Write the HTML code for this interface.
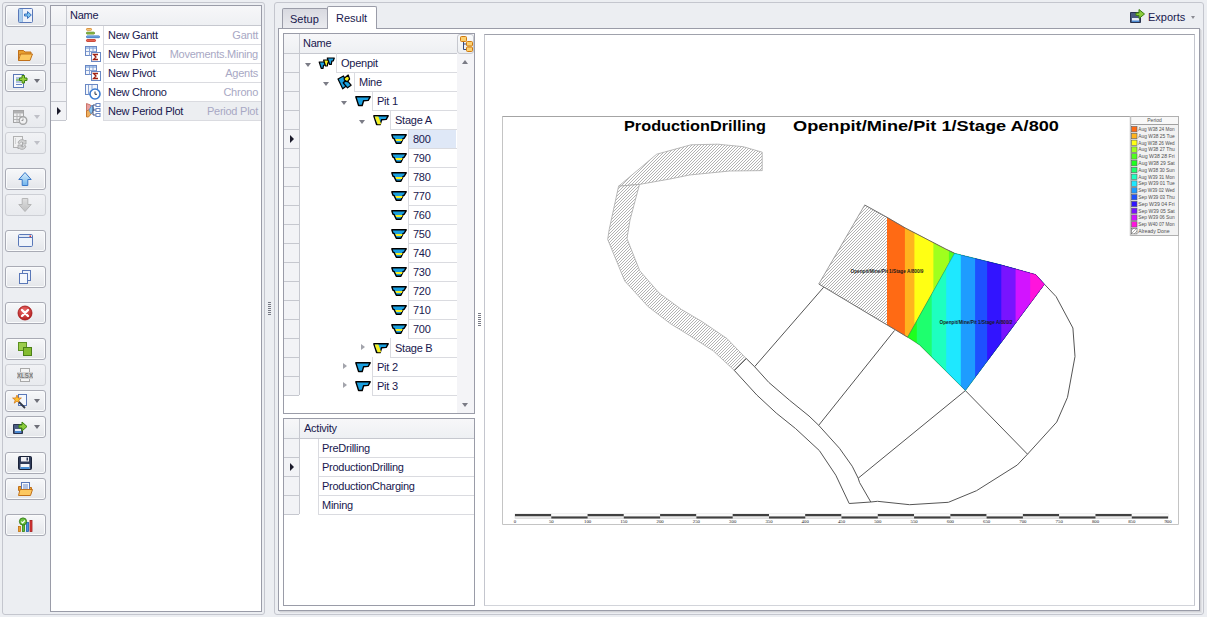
<!DOCTYPE html><html><head><meta charset="utf-8"><style>
*{box-sizing:border-box;margin:0;padding:0}
html,body{width:1207px;height:617px;overflow:hidden;background:#eceef2;font-family:"Liberation Sans",sans-serif;font-size:11px;color:#18184e}
.a{position:absolute}
.panel{position:absolute;border:1px solid #c4c6ce;border-radius:3px;background:#eceef2}
.btn{position:absolute;left:5px;width:41px;height:22px;border:1px solid #a9abb5;border-radius:3px;background:linear-gradient(#f7f8fa,#e4e6ea);box-shadow:inset 0 0 0 1px #fafbfc}
.btn.dis{border-color:#cdcfd5;background:linear-gradient(#f1f2f5,#e8eaee);box-shadow:none}
.btn .dd{position:absolute;left:28px;top:8px;width:0;height:0;border-left:3.5px solid transparent;border-right:3.5px solid transparent;border-top:4px solid #6e6f78}
.btn.dis .dd{border-top-color:#bfc0c7}
.grid{position:absolute;background:#fff;border:1px solid #9a9ca8}
.hdr{position:absolute;background:linear-gradient(#f7f7f9,#eef0f3);border-bottom:1px solid #c6c8cf}
.ind{position:absolute;background:#f2f3f6}
.hl{position:absolute;height:1px;background:#dadbe0}
.vl{position:absolute;width:1px;background:#dadbe0}
.t{position:absolute;white-space:nowrap;line-height:13px;letter-spacing:-0.25px}
.g{color:#a8a8c4}
.arr{position:absolute;width:0;height:0;border-top:4px solid transparent;border-bottom:4px solid transparent;border-left:4px solid #1a1a2a}
.exp{position:absolute;width:0;height:0;border-left:3.5px solid transparent;border-right:3.5px solid transparent;border-top:4px solid #7b7c86}
.col{position:absolute;width:0;height:0;border-top:3.5px solid transparent;border-bottom:3.5px solid transparent;border-left:4px solid #a3a4ac}
.grip{position:absolute;width:3px;height:13px;background:repeating-linear-gradient(#777984 0 1px,transparent 1px 2px)}
</style></head><body>
<div class="panel" style="left:2px;top:2px;width:263px;height:613px"></div>
<div class="btn" style="top:5px"><svg class="a" style="left:11px;top:1px" width="16" height="16" viewBox="0 0 16 16"><rect x="1.5" y="1.5" width="14" height="14" rx="1" fill="#eef2fa" stroke="#5a78b8"/>
<rect x="2" y="2" width="3" height="13" fill="#a9cdee"/><line x1="5.5" y1="2" x2="5.5" y2="15" stroke="#9ab8e0"/>
<path d="M7.5 7h3v-2.5l3.8 3.5-3.8 3.5v-2.5h-3z" fill="#7cc4f0" stroke="#2c68b8" stroke-width="0.9" stroke-linejoin="round"/></svg></div>
<div class="btn" style="top:44px"><svg class="a" style="left:11px;top:2px" width="16" height="16" viewBox="0 0 16 16"><path d="M1.5 3.5h5l1.5 1.5h6v3h-12.5z" fill="#e8a030" stroke="#c0701a"/>
<path d="M1.5 13.5l2-6.5h12l-2.5 6.5z" fill="#fcc860" stroke="#c0701a" stroke-linejoin="round"/>
<path d="M1.5 3.5v10" stroke="#c0701a"/></svg></div>
<div class="btn" style="top:70px"><svg class="a" style="left:6px;top:2px" width="16" height="16" viewBox="0 0 16 16"><rect x="1.5" y="1.5" width="10" height="13" fill="#f6f8fc" stroke="#5a78b8"/>
<path d="M4 5h5M4 9h5M4 11.5h6" stroke="#6a88c4" stroke-width="1"/><path d="M4 7h5" stroke="#4aa020" stroke-width="1.2"/>
<path d="M10 2.5h2.5v2.5h2.5v2.5h-2.5v2.5h-2.5v-2.5h-2.5v-2.5h2.5z" fill="#9ad040" stroke="#3c8010" stroke-width="1"/></svg><div class="dd"></div></div>
<div class="btn dis" style="top:106px"><svg class="a" style="left:6px;top:2px;opacity:0.72" width="16" height="16" viewBox="0 0 16 16"><rect x="1.5" y="1.5" width="10" height="12" fill="#f0f0f0" stroke="#8a8a8a"/>
<rect x="2" y="2" width="9" height="2.5" fill="#9a9a9a"/><path d="M2 7.5h9M2 10.5h5M5 4.5v9M8 4.5v4" stroke="#a0a0a0"/>
<circle cx="11" cy="11.5" r="3.8" fill="#f4f4f4" stroke="#8a8a8a" stroke-width="1.4"/><path d="M11 9.5v2h-1.5" stroke="#7a7a7a" fill="none"/></svg><div class="dd"></div></div>
<div class="btn dis" style="top:132px"><svg class="a" style="left:6px;top:2px;opacity:0.72" width="16" height="16" viewBox="0 0 16 16"><rect x="1.5" y="1.5" width="9" height="11" fill="#f2f2f2" stroke="#9a9a9a"/>
<path d="M3 4h1M3 6h1M3 8h1" stroke="#a0a0a0"/>
<path d="M6 8a4 4 0 0 1 7-2l1-1v4h-4l1.2-1.2a2.3 2.3 0 0 0-3.5 0.7z" fill="#c8c8c8" stroke="#8a8a8a" stroke-width="0.8"/>
<path d="M14 11a4 4 0 0 1-7 2l-1 1v-4h4l-1.2 1.2a2.3 2.3 0 0 0 3.5-0.7z" fill="#c8c8c8" stroke="#8a8a8a" stroke-width="0.8"/></svg><div class="dd"></div></div>
<div class="btn" style="top:168px"><svg class="a" style="left:11px;top:2px" width="16" height="16" viewBox="0 0 16 16"><defs><linearGradient id="gu" x1="0" y1="0" x2="0" y2="1"><stop offset="0" stop-color="#d8eefc"/><stop offset="1" stop-color="#70b4ec"/></linearGradient></defs>
<path d="M8 1.5l6.2 7h-3.4v6h-5.6v-6h-3.4z" fill="url(#gu)" stroke="#3a78c8" stroke-linejoin="round"/></svg></div>
<div class="btn dis" style="top:194px"><svg class="a" style="left:11px;top:2px;opacity:0.72" width="16" height="16" viewBox="0 0 16 16"><defs><linearGradient id="gd" x1="0" y1="0" x2="0" y2="1"><stop offset="0" stop-color="#d8d8d8"/><stop offset="1" stop-color="#b0b0b0"/></linearGradient></defs>
<path d="M8 14.5l6.2-7h-3.4v-6h-5.6v6h-3.4z" fill="url(#gd)" stroke="#a0a0a0" stroke-linejoin="round"/></svg></div>
<div class="btn" style="top:230px"><svg class="a" style="left:11px;top:2px" width="16" height="16" viewBox="0 0 16 16"><rect x="1.5" y="1.5" width="14" height="12" rx="1.2" fill="#eef3fb" stroke="#5a78b8"/>
<rect x="2" y="2" width="13" height="2.5" fill="#dfe8f6"/><path d="M2 4.5h13" stroke="#5a78b8"/><rect x="12.5" y="2.5" width="1.5" height="1.5" fill="#e03030"/></svg></div>
<div class="btn" style="top:266px"><svg class="a" style="left:11px;top:2px" width="16" height="16" viewBox="0 0 16 16"><rect x="5.5" y="1.5" width="8" height="10" fill="#eef3fb" stroke="#5a78b8"/>
<rect x="2.5" y="4.5" width="8" height="10" fill="#f4f7fc" stroke="#5a78b8"/></svg></div>
<div class="btn" style="top:302px"><svg class="a" style="left:11px;top:2px" width="16" height="16" viewBox="0 0 16 16"><defs><radialGradient id="gr" cx="0.45" cy="0.35" r="0.7"><stop offset="0" stop-color="#f07070"/><stop offset="1" stop-color="#b01818"/></radialGradient></defs>
<circle cx="8" cy="8" r="7" fill="url(#gr)" stroke="#a01010" stroke-width="0.8"/>
<path d="M5 5l6 6M11 5l-6 6" stroke="#fff" stroke-width="2.4" stroke-linecap="round"/></svg></div>
<div class="btn" style="top:338px"><svg class="a" style="left:11px;top:2px" width="16" height="16" viewBox="0 0 16 16"><rect x="1.5" y="1.5" width="8" height="8" fill="#9ccc4c" stroke="#5c9020"/>
<rect x="6.5" y="6.5" width="8" height="8" fill="#84bc30" stroke="#4c8018"/></svg></div>
<div class="btn dis" style="top:364px"><svg class="a" style="left:11px;top:2px" width="16" height="16" viewBox="0 0 16 16"><rect x="3.5" y="1.5" width="9" height="13" fill="#f4f4f4" stroke="#a8a8a8"/>
<rect x="0" y="5" width="16" height="7" fill="#d4d4d4"/>
<text x="8" y="11" font-family="Liberation Sans" font-size="7" font-weight="bold" fill="#7a7a7a" text-anchor="middle" textLength="16" lengthAdjust="spacingAndGlyphs">XLSX</text></svg></div>
<div class="btn" style="top:390px"><svg class="a" style="left:6px;top:2px" width="16" height="16" viewBox="0 0 16 16"><rect x="6.5" y="1.5" width="8" height="11" fill="#f4f7fc" stroke="#5a78b8"/>
<path d="M5 2l1.2 3h3.2l-2.6 2 1 3.2-2.8-2-2.8 2 1-3.2-2.6-2h3.2z" fill="#ffc030" stroke="#d07010" stroke-width="0.7"/>
<path d="M7 9l6 6" stroke="#303848" stroke-width="1.8"/></svg><div class="dd"></div></div>
<div class="btn" style="top:416px"><svg class="a" style="left:6px;top:2px" width="16" height="16" viewBox="0 0 16 16"><path d="M1.5 5.5h9v9h-9z" fill="#4a5a80" stroke="#2a3450"/><rect x="3" y="10" width="6" height="4" fill="#e8eef8"/><rect x="3" y="12" width="6" height="2" fill="#4a88d0"/>
<path d="M7 6h3v-3l5 4.5l-5 4.5v-3h-3z" fill="#8ccc3c" stroke="#3c8010" stroke-linejoin="round"/></svg><div class="dd"></div></div>
<div class="btn" style="top:452px"><svg class="a" style="left:11px;top:2px" width="16" height="16" viewBox="0 0 16 16"><rect x="1.5" y="1.5" width="13" height="13" rx="1" fill="#2e3a58" stroke="#1a2238"/>
<rect x="4" y="2" width="8" height="4.5" fill="#f0f0f4"/><rect x="9.5" y="2.5" width="1.5" height="3" fill="#2e3a58"/>
<rect x="3.5" y="9" width="9" height="5" fill="#f4f6fa"/><rect x="3.5" y="12" width="9" height="2" fill="#4a90d8"/></svg></div>
<div class="btn" style="top:478px"><svg class="a" style="left:11px;top:2px" width="16" height="16" viewBox="0 0 16 16"><path d="M1.5 5.5h3l1 1h9v3h-13z" fill="#e8a030" stroke="#c0701a"/>
<rect x="4.5" y="1.5" width="8" height="9" fill="#f6f8fc" stroke="#5a78b8"/><path d="M6 4h5M6 6h5M6 8h5" stroke="#6a88c4"/>
<path d="M1.5 14.5l1.5-6h12.5l-2 6z" fill="#fcc860" stroke="#c0701a" stroke-linejoin="round"/></svg></div>
<div class="btn" style="top:514px"><svg class="a" style="left:11px;top:2px" width="16" height="16" viewBox="0 0 16 16"><rect x="1.5" y="9.5" width="2" height="5" fill="#f0a030" stroke="#c07010" stroke-width="0.8"/>
<rect x="5.5" y="7.5" width="2" height="7" fill="#60c040" stroke="#308010" stroke-width="0.8"/>
<rect x="9.5" y="5.5" width="2" height="9" fill="#4a90e0" stroke="#2060b0" stroke-width="0.8"/>
<rect x="13" y="3.5" width="2" height="11" fill="#e04040" stroke="#a01818" stroke-width="0.8"/>
<circle cx="6" cy="4.5" r="3.6" fill="#6cc040" stroke="#2c7810" stroke-width="0.9"/><path d="M4.3 4.6l1.3 1.3 2.3-2.4" stroke="#fff" stroke-width="1.1" fill="none"/></svg></div>
<div class="grid" style="left:50px;top:5px;width:212px;height:607px"></div>
<div class="hdr" style="left:51px;top:6px;width:210px;height:20px"></div>
<div class="a" style="left:66px;top:6px;width:1px;height:19px;background:#c6c8cf"></div>
<div class="t" style="left:70px;top:9px">Name</div>
<div class="ind" style="left:51px;top:26px;width:15px;height:94px"></div>
<div class="a" style="left:66px;top:26px;width:1px;height:94px;background:#c6c8cf"></div>
<svg class="a" style="left:85px;top:27px" width="16" height="16" viewBox="0 0 16 16"><rect x="1.5" y="1.5" width="5" height="1.8" rx="0.6" fill="#fad08a" stroke="#d88a30" stroke-width="0.9"/>
<rect x="1.5" y="5.2" width="8" height="1.8" rx="0.6" fill="#9ccc50" stroke="#5a8a20" stroke-width="0.9"/>
<rect x="1.5" y="8.9" width="13" height="1.8" rx="0.6" fill="#7ab4ec" stroke="#3a74c0" stroke-width="0.9"/>
<rect x="1.5" y="12.6" width="9" height="1.8" rx="0.6" fill="#f07060" stroke="#c03020" stroke-width="0.9"/></svg>
<div class="t" style="left:108px;top:29px">New Gantt</div>
<div class="t g" style="right:949px;top:29px">Gantt</div>
<div class="hl" style="left:51px;top:44px;width:15px;background:#c6c8cf"></div>
<div class="hl" style="left:103px;top:44px;width:158px"></div>
<svg class="a" style="left:85px;top:46px" width="16" height="16" viewBox="0 0 16 16"><rect x="0.5" y="0.5" width="11" height="9" fill="#f4f7fc" stroke="#6a88c4"/><rect x="1" y="1" width="10" height="2" fill="#a8c4ea"/>
<path d="M1 5.5h10M4.5 1v8.5M8 1v4" stroke="#8aa4d4"/>
<rect x="6.5" y="6.5" width="9" height="9" fill="#fff" stroke="#6a88c4"/>
<path d="M13 8.5h-4.5l2.5 2.5-2.5 2.5h4.5" fill="none" stroke="#a02010" stroke-width="1.3"/></svg>
<div class="t" style="left:108px;top:48px">New Pivot</div>
<div class="t g" style="right:949px;top:48px">Movements.Mining</div>
<div class="hl" style="left:51px;top:63px;width:15px;background:#c6c8cf"></div>
<div class="hl" style="left:103px;top:63px;width:158px"></div>
<svg class="a" style="left:85px;top:65px" width="16" height="16" viewBox="0 0 16 16"><rect x="0.5" y="0.5" width="11" height="9" fill="#f4f7fc" stroke="#6a88c4"/><rect x="1" y="1" width="10" height="2" fill="#a8c4ea"/>
<path d="M1 5.5h10M4.5 1v8.5M8 1v4" stroke="#8aa4d4"/>
<rect x="6.5" y="6.5" width="9" height="9" fill="#fff" stroke="#6a88c4"/>
<path d="M13 8.5h-4.5l2.5 2.5-2.5 2.5h4.5" fill="none" stroke="#a02010" stroke-width="1.3"/></svg>
<div class="t" style="left:108px;top:67px">New Pivot</div>
<div class="t g" style="right:949px;top:67px">Agents</div>
<div class="hl" style="left:51px;top:82px;width:15px;background:#c6c8cf"></div>
<div class="hl" style="left:103px;top:82px;width:158px"></div>
<svg class="a" style="left:85px;top:84px" width="16" height="16" viewBox="0 0 16 16"><rect x="0.5" y="0.5" width="12" height="10" fill="#f4f7fc" stroke="#6a88c4"/><path d="M3.5 1v9.5M7 1v4" stroke="#8aa4d4"/>
<circle cx="10" cy="10" r="5" fill="#fff" stroke="#3a7ad0" stroke-width="1.6"/><path d="M10 7.5v2.8h2" stroke="#303848" stroke-width="1" fill="none"/></svg>
<div class="t" style="left:108px;top:86px">New Chrono</div>
<div class="t g" style="right:949px;top:86px">Chrono</div>
<div class="hl" style="left:51px;top:101px;width:15px;background:#c6c8cf"></div>
<div class="hl" style="left:103px;top:101px;width:158px"></div>
<div class="a" style="left:104px;top:102px;width:157px;height:18px;background:#eceef1"></div>
<svg class="a" style="left:85px;top:102px" width="16" height="16" viewBox="0 0 16 16"><path d="M1.5 1.5l4 1.5 2 4-2 3.5-4 4z" fill="#e8a0a0" stroke="#c06050" stroke-width="0.8"/>
<path d="M1.5 9l4-2 2 3.5-4 4.5h-2z" fill="#f0b060" stroke="#c07020" stroke-width="0.8"/>
<path d="M4 8l3-5 2 4-3 5z" fill="#8ac4ee" stroke="#4a88c8" stroke-width="0.7"/>
<path d="M8 3h3M8 8h3M8 13h3M8 3v10" stroke="#3a4a78" stroke-width="1"/>
<rect x="11" y="1.5" width="4" height="3" fill="#fff" stroke="#6a88c4"/><rect x="11" y="6.5" width="4" height="3" fill="#fff" stroke="#6a88c4"/><rect x="11" y="11.5" width="4" height="3" fill="#fff" stroke="#6a88c4"/></svg>
<div class="t" style="left:108px;top:105px">New Period Plot</div>
<div class="t g" style="right:949px;top:105px">Period Plot</div>
<div class="hl" style="left:51px;top:120px;width:15px;background:#c6c8cf"></div>
<div class="hl" style="left:103px;top:120px;width:158px"></div>
<div class="vl" style="left:103px;top:26px;height:94px"></div>
<div class="arr" style="left:57px;top:107px"></div>
<div class="grip" style="left:268px;top:302px"></div>
<div class="panel" style="left:274px;top:2px;width:930px;height:613px"></div>
<div class="a" style="left:282px;top:8px;width:46px;height:21px;border:1px solid #9a9ca8;border-bottom:none;border-radius:2px 2px 0 0;background:linear-gradient(#d8d9e0,#ebecf0)"></div>
<div class="t" style="left:290px;top:13px;letter-spacing:0">Setup</div>
<div class="a" style="left:327px;top:6px;width:50px;height:23px;border:1px solid #9a9ca8;border-bottom:none;border-radius:2px 2px 0 0;background:#fff;z-index:2"></div>
<div class="t" style="left:336px;top:12px;z-index:3;letter-spacing:0">Result</div>
<svg class="a" style="left:1130px;top:8px" width="16" height="16" viewBox="0 0 16 16"><path d="M0.5 4.5h10v10h-10z" fill="#4a5a80" stroke="#2a3450"/><rect x="2" y="10" width="7" height="4" fill="#e8eef8"/><rect x="2" y="12.5" width="7" height="1.5" fill="#4a88d0"/>
<path d="M6 5h3v-3.5l5.5 4.5-5.5 4.5v-3h-3z" fill="#8ccc3c" stroke="#3c8010" stroke-linejoin="round"/></svg>
<div class="t" style="left:1148px;top:11px;letter-spacing:0">Exports</div>
<div class="a" style="left:1191px;top:16px;width:0;height:0;border-left:2.5px solid transparent;border-right:2.5px solid transparent;border-top:3px solid #8a8b93"></div>
<div class="a" style="left:278px;top:28px;width:922px;height:583px;border:1px solid #9a9ca8;background:#fff;box-shadow:1px 1px 0 #d2d3d8,2px 2px 0 #e0e1e5"></div>
<div class="a" style="left:328px;top:28px;width:48px;height:1px;background:#fff;z-index:2"></div>
<div class="grid" style="left:283px;top:33px;width:192px;height:381px"></div>
<div class="hdr" style="left:284px;top:34px;width:173px;height:20px"></div>
<div class="a" style="left:299px;top:34px;width:1px;height:19px;background:#c6c8cf"></div>
<div class="t" style="left:303px;top:37px">Name</div>
<div class="a" style="left:457px;top:34px;width:17px;height:379px;background:#f4f4f7"></div>
<div class="a" style="left:457px;top:34px;width:17px;height:20px;border:1px solid #c6c8cf;border-radius:3px;background:linear-gradient(#fafbfc,#eceef1)"></div>
<svg class="a" style="left:458px;top:35px" width="16" height="18" viewBox="0 0 16 18"><path d="M5.5 6.5V14.5H9M5.5 9H9" stroke="#3a4a78" fill="none"/>
<rect x="2.5" y="1.5" width="6" height="5" rx="1" fill="#fcd070" stroke="#d07a10"/>
<rect x="8.5" y="6.5" width="6" height="4.5" rx="1" fill="#fcd070" stroke="#d07a10"/>
<rect x="8.5" y="12" width="6" height="4.5" rx="1" fill="#fcd070" stroke="#d07a10"/></svg>
<div class="a" style="left:462px;top:60px;width:0;height:0;border-left:3.5px solid transparent;border-right:3.5px solid transparent;border-bottom:4px solid #7a7b85"></div>
<div class="exp" style="left:462px;top:403px;border-top-color:#7a7b85"></div>
<div class="ind" style="left:284px;top:54px;width:15px;height:341px"></div>
<div class="a" style="left:299px;top:54px;width:1px;height:341px;background:#c6c8cf"></div>
<div class="vl" style="left:336px;top:53px;height:20px"></div>
<div class="hl" style="left:336px;top:72px;width:121px"></div>
<div class="hl" style="left:284px;top:72px;width:15px;background:#c6c8cf"></div>
<svg class="a" style="left:318px;top:57px" width="17" height="12" viewBox="0 0 17 12"><path d="M1.2 5h7l-1.2 3-1.5 0.3-0.5 3h-1.8z" fill="#1aa0e0" stroke="#000" stroke-width="1.2" stroke-linejoin="round"/>
<path d="M5.6 3h6.4l-1 2.6-1.2 0.3-0.5 3.1h-1.8z" fill="#f8f020" stroke="#000" stroke-width="1.2" stroke-linejoin="round"/>
<path d="M9.3 1h7l-1 2.8-1.5 0.3-0.5 3.2h-1.8z" fill="#1aa0e0" stroke="#000" stroke-width="1.2" stroke-linejoin="round"/></svg>
<div class="t" style="left:341px;top:57px">Openpit</div>
<div class="exp" style="left:305px;top:63px"></div>
<div class="vl" style="left:354px;top:72px;height:20px"></div>
<div class="hl" style="left:354px;top:91px;width:103px"></div>
<div class="hl" style="left:284px;top:91px;width:15px;background:#c6c8cf"></div>
<svg class="a" style="left:337px;top:74px" width="16" height="16" viewBox="0 0 16 16"><path d="M1 5l5.5-3 2.2 4.2-2.4 2.6 3 3.2-3.6 2.8z" fill="#1aa0e0" stroke="#000" stroke-width="1.2" stroke-linejoin="round"/>
<path d="M6.3 8.8l3.6-2.6 4.2 5-3.6 2.6z" fill="#1aa0e0" stroke="#000" stroke-width="1.2" stroke-linejoin="round"/>
<path d="M7.2 4.2l4-3.2 1.4 4-2.4 2.8-2.8-1.8z" fill="#f8f020" stroke="#000" stroke-width="1.2" stroke-linejoin="round"/></svg>
<div class="t" style="left:359px;top:76px">Mine</div>
<div class="exp" style="left:323px;top:82px"></div>
<div class="vl" style="left:372px;top:91px;height:20px"></div>
<div class="hl" style="left:372px;top:110px;width:85px"></div>
<div class="hl" style="left:284px;top:110px;width:15px;background:#c6c8cf"></div>
<svg class="a" style="left:355px;top:96px" width="16" height="11" viewBox="0 0 16 11"><path d="M0.8 0.8h14.4l-2 3.6-4.6 0.4-1.4 4.7h-3.6z" fill="#1aa0e0" stroke="#000" stroke-width="1.4" stroke-linejoin="round"/></svg>
<div class="t" style="left:377px;top:95px">Pit 1</div>
<div class="exp" style="left:341px;top:101px"></div>
<div class="vl" style="left:390px;top:110px;height:20px"></div>
<div class="hl" style="left:390px;top:129px;width:67px"></div>
<div class="hl" style="left:284px;top:129px;width:15px;background:#c6c8cf"></div>
<svg class="a" style="left:373px;top:115px" width="16" height="11" viewBox="0 0 16 11"><path d="M0.8 0.8h14.4l-2 3.6-4.6 0.4-1.4 4.7h-3.6z" fill="#1aa0e0" stroke="#000" stroke-width="1.4" stroke-linejoin="round"/>
<path d="M1.6 1.5h3.8l2.8 7.8h-3.6z" fill="#f8f020"/></svg>
<div class="t" style="left:395px;top:114px">Stage A</div>
<div class="exp" style="left:359px;top:120px"></div>
<div class="a" style="left:409px;top:130px;width:47px;height:18px;background:#dfe8f7"></div>
<div class="vl" style="left:408px;top:129px;height:20px"></div>
<div class="hl" style="left:408px;top:148px;width:49px"></div>
<div class="hl" style="left:284px;top:148px;width:15px;background:#c6c8cf"></div>
<svg class="a" style="left:391px;top:134px" width="16" height="11" viewBox="0 0 16 11"><path d="M0.8 0.8h14.4l-2 3.4-1 0.2-2.3 4.9h-4.6l-2.3-4.9-1-0.2z" fill="#1aa0e0" stroke="#000" stroke-width="1.4" stroke-linejoin="round"/>
<path d="M4.3 5h7.4l-0.9 2h-5.6z" fill="#f8f020"/></svg>
<div class="t" style="left:413px;top:133px">800</div>
<div class="vl" style="left:408px;top:148px;height:20px"></div>
<div class="hl" style="left:408px;top:167px;width:49px"></div>
<div class="hl" style="left:284px;top:167px;width:15px;background:#c6c8cf"></div>
<svg class="a" style="left:391px;top:153px" width="16" height="11" viewBox="0 0 16 11"><path d="M0.8 0.8h14.4l-2 3.4-1 0.2-2.3 4.9h-4.6l-2.3-4.9-1-0.2z" fill="#1aa0e0" stroke="#000" stroke-width="1.4" stroke-linejoin="round"/>
<path d="M4.3 5h7.4l-0.9 2h-5.6z" fill="#f8f020"/></svg>
<div class="t" style="left:413px;top:152px">790</div>
<div class="vl" style="left:408px;top:167px;height:20px"></div>
<div class="hl" style="left:408px;top:186px;width:49px"></div>
<div class="hl" style="left:284px;top:186px;width:15px;background:#c6c8cf"></div>
<svg class="a" style="left:391px;top:172px" width="16" height="11" viewBox="0 0 16 11"><path d="M0.8 0.8h14.4l-2 3.4-1 0.2-2.3 4.9h-4.6l-2.3-4.9-1-0.2z" fill="#1aa0e0" stroke="#000" stroke-width="1.4" stroke-linejoin="round"/>
<path d="M4.3 5h7.4l-0.9 2h-5.6z" fill="#f8f020"/></svg>
<div class="t" style="left:413px;top:171px">780</div>
<div class="vl" style="left:408px;top:186px;height:20px"></div>
<div class="hl" style="left:408px;top:205px;width:49px"></div>
<div class="hl" style="left:284px;top:205px;width:15px;background:#c6c8cf"></div>
<svg class="a" style="left:391px;top:191px" width="16" height="11" viewBox="0 0 16 11"><path d="M0.8 0.8h14.4l-2 3.4-1 0.2-2.3 4.9h-4.6l-2.3-4.9-1-0.2z" fill="#1aa0e0" stroke="#000" stroke-width="1.4" stroke-linejoin="round"/>
<path d="M4.3 5h7.4l-0.9 2h-5.6z" fill="#f8f020"/></svg>
<div class="t" style="left:413px;top:190px">770</div>
<div class="vl" style="left:408px;top:205px;height:20px"></div>
<div class="hl" style="left:408px;top:224px;width:49px"></div>
<div class="hl" style="left:284px;top:224px;width:15px;background:#c6c8cf"></div>
<svg class="a" style="left:391px;top:210px" width="16" height="11" viewBox="0 0 16 11"><path d="M0.8 0.8h14.4l-2 3.4-1 0.2-2.3 4.9h-4.6l-2.3-4.9-1-0.2z" fill="#1aa0e0" stroke="#000" stroke-width="1.4" stroke-linejoin="round"/>
<path d="M4.3 5h7.4l-0.9 2h-5.6z" fill="#f8f020"/></svg>
<div class="t" style="left:413px;top:209px">760</div>
<div class="vl" style="left:408px;top:224px;height:20px"></div>
<div class="hl" style="left:408px;top:243px;width:49px"></div>
<div class="hl" style="left:284px;top:243px;width:15px;background:#c6c8cf"></div>
<svg class="a" style="left:391px;top:229px" width="16" height="11" viewBox="0 0 16 11"><path d="M0.8 0.8h14.4l-2 3.4-1 0.2-2.3 4.9h-4.6l-2.3-4.9-1-0.2z" fill="#1aa0e0" stroke="#000" stroke-width="1.4" stroke-linejoin="round"/>
<path d="M4.3 5h7.4l-0.9 2h-5.6z" fill="#f8f020"/></svg>
<div class="t" style="left:413px;top:228px">750</div>
<div class="vl" style="left:408px;top:243px;height:20px"></div>
<div class="hl" style="left:408px;top:262px;width:49px"></div>
<div class="hl" style="left:284px;top:262px;width:15px;background:#c6c8cf"></div>
<svg class="a" style="left:391px;top:248px" width="16" height="11" viewBox="0 0 16 11"><path d="M0.8 0.8h14.4l-2 3.4-1 0.2-2.3 4.9h-4.6l-2.3-4.9-1-0.2z" fill="#1aa0e0" stroke="#000" stroke-width="1.4" stroke-linejoin="round"/>
<path d="M4.3 5h7.4l-0.9 2h-5.6z" fill="#f8f020"/></svg>
<div class="t" style="left:413px;top:247px">740</div>
<div class="vl" style="left:408px;top:262px;height:20px"></div>
<div class="hl" style="left:408px;top:281px;width:49px"></div>
<div class="hl" style="left:284px;top:281px;width:15px;background:#c6c8cf"></div>
<svg class="a" style="left:391px;top:267px" width="16" height="11" viewBox="0 0 16 11"><path d="M0.8 0.8h14.4l-2 3.4-1 0.2-2.3 4.9h-4.6l-2.3-4.9-1-0.2z" fill="#1aa0e0" stroke="#000" stroke-width="1.4" stroke-linejoin="round"/>
<path d="M4.3 5h7.4l-0.9 2h-5.6z" fill="#f8f020"/></svg>
<div class="t" style="left:413px;top:266px">730</div>
<div class="vl" style="left:408px;top:281px;height:20px"></div>
<div class="hl" style="left:408px;top:300px;width:49px"></div>
<div class="hl" style="left:284px;top:300px;width:15px;background:#c6c8cf"></div>
<svg class="a" style="left:391px;top:286px" width="16" height="11" viewBox="0 0 16 11"><path d="M0.8 0.8h14.4l-2 3.4-1 0.2-2.3 4.9h-4.6l-2.3-4.9-1-0.2z" fill="#1aa0e0" stroke="#000" stroke-width="1.4" stroke-linejoin="round"/>
<path d="M4.3 5h7.4l-0.9 2h-5.6z" fill="#f8f020"/></svg>
<div class="t" style="left:413px;top:285px">720</div>
<div class="vl" style="left:408px;top:300px;height:20px"></div>
<div class="hl" style="left:408px;top:319px;width:49px"></div>
<div class="hl" style="left:284px;top:319px;width:15px;background:#c6c8cf"></div>
<svg class="a" style="left:391px;top:305px" width="16" height="11" viewBox="0 0 16 11"><path d="M0.8 0.8h14.4l-2 3.4-1 0.2-2.3 4.9h-4.6l-2.3-4.9-1-0.2z" fill="#1aa0e0" stroke="#000" stroke-width="1.4" stroke-linejoin="round"/>
<path d="M4.3 5h7.4l-0.9 2h-5.6z" fill="#f8f020"/></svg>
<div class="t" style="left:413px;top:304px">710</div>
<div class="vl" style="left:408px;top:319px;height:20px"></div>
<div class="hl" style="left:408px;top:338px;width:49px"></div>
<div class="hl" style="left:284px;top:338px;width:15px;background:#c6c8cf"></div>
<svg class="a" style="left:391px;top:324px" width="16" height="11" viewBox="0 0 16 11"><path d="M0.8 0.8h14.4l-2 3.4-1 0.2-2.3 4.9h-4.6l-2.3-4.9-1-0.2z" fill="#1aa0e0" stroke="#000" stroke-width="1.4" stroke-linejoin="round"/>
<path d="M4.3 5h7.4l-0.9 2h-5.6z" fill="#f8f020"/></svg>
<div class="t" style="left:413px;top:323px">700</div>
<div class="vl" style="left:390px;top:338px;height:20px"></div>
<div class="hl" style="left:390px;top:357px;width:67px"></div>
<div class="hl" style="left:284px;top:357px;width:15px;background:#c6c8cf"></div>
<svg class="a" style="left:373px;top:343px" width="16" height="11" viewBox="0 0 16 11"><path d="M0.8 0.8h14.4l-2 3.6-4.6 0.4-1.4 4.7h-3.6z" fill="#1aa0e0" stroke="#000" stroke-width="1.4" stroke-linejoin="round"/>
<path d="M1.6 1.5h3.8l2.8 7.8h-3.6z" fill="#f8f020"/></svg>
<div class="t" style="left:395px;top:342px">Stage B</div>
<div class="col" style="left:361px;top:344px"></div>
<div class="vl" style="left:372px;top:357px;height:20px"></div>
<div class="hl" style="left:372px;top:376px;width:85px"></div>
<div class="hl" style="left:284px;top:376px;width:15px;background:#c6c8cf"></div>
<svg class="a" style="left:355px;top:362px" width="16" height="11" viewBox="0 0 16 11"><path d="M0.8 0.8h14.4l-2 3.6-4.6 0.4-1.4 4.7h-3.6z" fill="#1aa0e0" stroke="#000" stroke-width="1.4" stroke-linejoin="round"/></svg>
<div class="t" style="left:377px;top:361px">Pit 2</div>
<div class="col" style="left:343px;top:363px"></div>
<div class="vl" style="left:372px;top:376px;height:20px"></div>
<div class="hl" style="left:372px;top:395px;width:85px"></div>
<div class="hl" style="left:284px;top:395px;width:15px;background:#c6c8cf"></div>
<svg class="a" style="left:355px;top:381px" width="16" height="11" viewBox="0 0 16 11"><path d="M0.8 0.8h14.4l-2 3.6-4.6 0.4-1.4 4.7h-3.6z" fill="#1aa0e0" stroke="#000" stroke-width="1.4" stroke-linejoin="round"/></svg>
<div class="t" style="left:377px;top:380px">Pit 3</div>
<div class="col" style="left:343px;top:382px"></div>
<div class="arr" style="left:290px;top:135px"></div>
<div class="grid" style="left:283px;top:418px;width:192px;height:188px"></div>
<div class="hdr" style="left:284px;top:419px;width:190px;height:20px"></div>
<div class="a" style="left:299px;top:419px;width:1px;height:19px;background:#c6c8cf"></div>
<div class="t" style="left:304px;top:422px">Activity</div>
<div class="ind" style="left:284px;top:439px;width:15px;height:75px"></div>
<div class="a" style="left:299px;top:439px;width:1px;height:75px;background:#c6c8cf"></div>
<div class="hl" style="left:284px;top:457px;width:15px;background:#c6c8cf"></div>
<div class="hl" style="left:318px;top:457px;width:156px"></div>
<div class="t" style="left:322px;top:442px">PreDrilling</div>
<div class="hl" style="left:284px;top:476px;width:15px;background:#c6c8cf"></div>
<div class="hl" style="left:318px;top:476px;width:156px"></div>
<div class="t" style="left:322px;top:461px">ProductionDrilling</div>
<div class="hl" style="left:284px;top:495px;width:15px;background:#c6c8cf"></div>
<div class="hl" style="left:318px;top:495px;width:156px"></div>
<div class="t" style="left:322px;top:480px">ProductionCharging</div>
<div class="hl" style="left:284px;top:514px;width:15px;background:#c6c8cf"></div>
<div class="hl" style="left:318px;top:514px;width:156px"></div>
<div class="t" style="left:322px;top:499px">Mining</div>
<div class="vl" style="left:318px;top:439px;height:75px"></div>
<div class="arr" style="left:290px;top:463px"></div>
<div class="grip" style="left:478px;top:313px"></div>
<div class="a" style="left:484px;top:34px;width:711px;height:572px;border:1px solid #c4c6ce;border-top-color:#a0a2ac;border-bottom-color:#d2d4da;background:#fff"></div>
<svg class="a" style="left:0;top:0" width="1207" height="617" viewBox="0 0 1207 617">
<defs><pattern id="hatch" patternUnits="userSpaceOnUse" width="3" height="3">
<rect width="3" height="3" fill="#fff"/><path d="M0 2h1v1h-1zM1 1h1v1h-1zM2 0h1v1h-1z" fill="#b2b2b2" shape-rendering="crispEdges"/></pattern>
<clipPath id="pc"><rect x="502" y="116" width="676" height="408"/></clipPath></defs>
<path d="M502.5,524.5 V116.5 H1178.5 V524.5 Z" fill="#fff" stroke="#c4c4c4" stroke-width="1"/>
<path d="M502.5,116.5 H1130" stroke="#a4a4a4" stroke-width="1"/>
<text x="624" y="131" font-family="Liberation Sans" font-weight="bold" font-size="14.6" textLength="142" lengthAdjust="spacingAndGlyphs" fill="#000">ProductionDrilling</text>
<text x="793" y="131" font-family="Liberation Sans" font-weight="bold" font-size="14.6" textLength="266" lengthAdjust="spacingAndGlyphs" fill="#000">Openpit/Mine/Pit 1/Stage A/800</text>
<polygon points="618.6,186.2 656.7,154.2 691.0,144.8 717.8,144.2 743.2,146.7 762.2,152.2 762.2,170.6 729.7,171.0 689.5,175.0 670.0,179.0 639.5,184.4" stroke="#a8a8a8" stroke-width="0.8" fill="url(#hatch)"/>
<polygon points="618.6,186.2 639.5,184.4 630.0,220.0 627.0,238.6 639.7,270.7 659.1,293.0 681.5,309.5 701.6,321.3 726.9,338.5 746.3,358.6 734.4,370.5 713.5,351.1 689.6,335.5 670.3,323.6 647.9,306.4 633.0,290.0 624.8,281.1 607.7,239.4 609.2,229.5" stroke="#a8a8a8" stroke-width="0.8" fill="url(#hatch)"/>
<polygon points="734.4,370.5 756.8,395.0 776.2,413.0 795.6,428.6 819.4,450.6 835.8,475.2 849.2,503.5 870.8,502.0 859.6,482.6 858.2,478.2 852.2,466.2 839.5,448.3 818.7,425.3 809.0,416.0 789.6,400.3 768.8,382.4 754.6,366.7 746.3,358.6" fill="#fff" stroke="#555" stroke-width="1" />
<polyline points="870.8,502.0 877.5,501.3 909.6,504.7 948.4,502.3 976.5,490.7 1017.3,465.0 1027.5,454.2 1056.7,422.1 1067.5,397.3 1075.0,356.5 1072.9,328.0 1056.1,296.6 1044.5,284.3" stroke="#555" stroke-width="1" fill="none"/>
<polyline points="754.6,366.7 823.7,287.2" stroke="#555" stroke-width="1" fill="none"/>
<polyline points="818.7,425.3 894.5,330.5" stroke="#555" stroke-width="1" fill="none"/>
<polyline points="858.2,478.2 965.4,390.6 1027.5,454.2" stroke="#555" stroke-width="1" fill="none"/>
<clipPath id="c1"><polygon points="864.7,205.0 887.0,217.3 905.5,228.1 945.5,248.9 954.6,253.3 907.6,337.2 818.8,284.0"/></clipPath>
<polygon points="864.7,205.0 887.0,217.3 905.5,228.1 945.5,248.9 954.6,253.3 907.6,337.2 818.8,284.0" fill="url(#hatch)"/>
<g clip-path="url(#c1)"><rect x="887" y="200" width="73.0" height="140" fill="#ff6a14"/><rect x="904.9" y="200" width="55.1" height="140" fill="#ffb41e"/><rect x="914.4" y="200" width="45.6" height="140" fill="#ffff14"/><rect x="933.4" y="200" width="26.6" height="140" fill="#a0ff1e"/><rect x="948.9" y="200" width="11.1" height="140" fill="#50ff1e"/></g>
<polygon points="864.7,205.0 887.0,217.3 905.5,228.1 945.5,248.9 954.6,253.3 907.6,337.2 818.8,284.0" fill="none" stroke="#8a8a8a" stroke-width="0.8"/>
<clipPath id="c2"><polygon points="954.6,253.3 1000.0,264.6 1035.7,274.5 1044.5,284.3 965.4,390.6 919.6,345.0 907.6,337.2"/></clipPath>
<g clip-path="url(#c2)"><rect x="900" y="250" width="150.0" height="145" fill="#1eff1e"/><rect x="916.8" y="250" width="133.2" height="145" fill="#1eff6e"/><rect x="931.7" y="250" width="118.3" height="145" fill="#1effc0"/><rect x="946.2" y="250" width="103.8" height="145" fill="#1ee8ff"/><rect x="960.8" y="250" width="89.2" height="145" fill="#1e9cff"/><rect x="975.1" y="250" width="74.9" height="145" fill="#1e50ff"/><rect x="987.1" y="250" width="62.9" height="145" fill="#3214ff"/><rect x="1001.3" y="250" width="48.7" height="145" fill="#7814ff"/><rect x="1015.6" y="250" width="34.4" height="145" fill="#d214ff"/><rect x="1030.2" y="250" width="19.8" height="145" fill="#ff14dc"/></g>
<polyline points="864.7,205 887,217.3 905.5,228.1 945.5,248.9 954.6,253.3 1000,264.6 1035.7,274.5 1044.5,284.3" stroke="rgba(0,0,0,0.32)" stroke-width="0.9" fill="none"/>
<polyline points="818.8,284 907.6,337.2 919.6,345 965.4,390.6 1044.5,284.3" stroke="rgba(0,0,0,0.32)" stroke-width="0.9" fill="none"/>
<polyline points="954.6,253.3 907.6,337.2" stroke="rgba(0,0,0,0.25)" stroke-width="0.7" fill="none"/>
<text x="850.5" y="273" font-family="Liberation Sans" font-size="5.2" font-weight="bold" fill="#1a1a1a" textLength="73" lengthAdjust="spacingAndGlyphs">Openpit/Mine/Pit 1/Stage A/800/9</text>
<text x="939.5" y="324" font-family="Liberation Sans" font-size="5.2" font-weight="bold" fill="#1a1a1a" textLength="73" lengthAdjust="spacingAndGlyphs">Openpit/Mine/Pit 1/Stage A/800/2</text>
<rect x="1130.5" y="116.5" width="48" height="119" fill="#f2f2f2" stroke="#b0b0b0"/>
<rect x="1131" y="117" width="47" height="7.5" fill="#f8f8f8"/>
<line x1="1131" y1="124.5" x2="1178" y2="124.5" stroke="#a0a0a0"/>
<line x1="1130.5" y1="116" x2="1130.5" y2="236" stroke="#c0c0c0" stroke-width="1.5"/>
<text x="1154.5" y="122.3" font-family="Liberation Sans" font-size="5" fill="#505050" text-anchor="middle">Period</text>
<rect x="1131.5" y="126.5" width="5.5" height="5.4" fill="#ff6a14" stroke="#606060" stroke-width="0.6"/>
<text x="1138.3" y="131.0" font-family="Liberation Sans" font-size="5.2" fill="#505050" textLength="36.4" lengthAdjust="spacingAndGlyphs">Aug W38 24 Mon</text>
<rect x="1131.5" y="133.3" width="5.5" height="5.4" fill="#ffb41e" stroke="#606060" stroke-width="0.6"/>
<text x="1138.3" y="137.8" font-family="Liberation Sans" font-size="5.2" fill="#505050" textLength="36.4" lengthAdjust="spacingAndGlyphs">Aug W38 25 Tue</text>
<rect x="1131.5" y="140.1" width="5.5" height="5.4" fill="#ffff14" stroke="#606060" stroke-width="0.6"/>
<text x="1138.3" y="144.6" font-family="Liberation Sans" font-size="5.2" fill="#505050" textLength="36.4" lengthAdjust="spacingAndGlyphs">Aug W38 26 Wed</text>
<rect x="1131.5" y="146.9" width="5.5" height="5.4" fill="#a0ff1e" stroke="#606060" stroke-width="0.6"/>
<text x="1138.3" y="151.4" font-family="Liberation Sans" font-size="5.2" fill="#505050" textLength="36.4" lengthAdjust="spacingAndGlyphs">Aug W38 27 Thu</text>
<rect x="1131.5" y="153.7" width="5.5" height="5.4" fill="#50ff1e" stroke="#606060" stroke-width="0.6"/>
<text x="1138.3" y="158.2" font-family="Liberation Sans" font-size="5.2" fill="#505050" textLength="36.4" lengthAdjust="spacingAndGlyphs">Aug W38 28 Fri</text>
<rect x="1131.5" y="160.5" width="5.5" height="5.4" fill="#1eff1e" stroke="#606060" stroke-width="0.6"/>
<text x="1138.3" y="165.0" font-family="Liberation Sans" font-size="5.2" fill="#505050" textLength="36.4" lengthAdjust="spacingAndGlyphs">Aug W38 29 Sat</text>
<rect x="1131.5" y="167.3" width="5.5" height="5.4" fill="#1eff6e" stroke="#606060" stroke-width="0.6"/>
<text x="1138.3" y="171.8" font-family="Liberation Sans" font-size="5.2" fill="#505050" textLength="36.4" lengthAdjust="spacingAndGlyphs">Aug W38 30 Sun</text>
<rect x="1131.5" y="174.1" width="5.5" height="5.4" fill="#1effc0" stroke="#606060" stroke-width="0.6"/>
<text x="1138.3" y="178.6" font-family="Liberation Sans" font-size="5.2" fill="#505050" textLength="36.4" lengthAdjust="spacingAndGlyphs">Aug W39 31 Mon</text>
<rect x="1131.5" y="180.9" width="5.5" height="5.4" fill="#1ee8ff" stroke="#606060" stroke-width="0.6"/>
<text x="1138.3" y="185.4" font-family="Liberation Sans" font-size="5.2" fill="#505050" textLength="36.4" lengthAdjust="spacingAndGlyphs">Sep W39 01 Tue</text>
<rect x="1131.5" y="187.7" width="5.5" height="5.4" fill="#1e9cff" stroke="#606060" stroke-width="0.6"/>
<text x="1138.3" y="192.2" font-family="Liberation Sans" font-size="5.2" fill="#505050" textLength="36.4" lengthAdjust="spacingAndGlyphs">Sep W39 02 Wed</text>
<rect x="1131.5" y="194.5" width="5.5" height="5.4" fill="#1e50ff" stroke="#606060" stroke-width="0.6"/>
<text x="1138.3" y="199.0" font-family="Liberation Sans" font-size="5.2" fill="#505050" textLength="36.4" lengthAdjust="spacingAndGlyphs">Sep W39 03 Thu</text>
<rect x="1131.5" y="201.3" width="5.5" height="5.4" fill="#3214ff" stroke="#606060" stroke-width="0.6"/>
<text x="1138.3" y="205.8" font-family="Liberation Sans" font-size="5.2" fill="#505050" textLength="36.4" lengthAdjust="spacingAndGlyphs">Sep W39 04 Fri</text>
<rect x="1131.5" y="208.1" width="5.5" height="5.4" fill="#7814ff" stroke="#606060" stroke-width="0.6"/>
<text x="1138.3" y="212.6" font-family="Liberation Sans" font-size="5.2" fill="#505050" textLength="36.4" lengthAdjust="spacingAndGlyphs">Sep W39 05 Sat</text>
<rect x="1131.5" y="214.9" width="5.5" height="5.4" fill="#d214ff" stroke="#606060" stroke-width="0.6"/>
<text x="1138.3" y="219.4" font-family="Liberation Sans" font-size="5.2" fill="#505050" textLength="36.4" lengthAdjust="spacingAndGlyphs">Sep W39 06 Sun</text>
<rect x="1131.5" y="221.7" width="5.5" height="5.4" fill="#ff14dc" stroke="#606060" stroke-width="0.6"/>
<text x="1138.3" y="226.2" font-family="Liberation Sans" font-size="5.2" fill="#505050" textLength="36.4" lengthAdjust="spacingAndGlyphs">Sep W40 07 Mon</text>
<rect x="1131.5" y="228.5" width="5.5" height="5.4" fill="url(#hatch)" stroke="#606060" stroke-width="0.6"/>
<text x="1138.3" y="233.0" font-family="Liberation Sans" font-size="5.2" fill="#505050" textLength="31.2" lengthAdjust="spacingAndGlyphs">Already Done</text>
<rect x="515" y="514" width="653.0" height="4.5" fill="#e8e8e8" stroke="#c8c8c8" stroke-width="0.5"/>
<rect x="515.0" y="514" width="36.28" height="2.2" fill="#404040"/>
<rect x="551.3" y="516.3" width="36.28" height="2.2" fill="#404040"/><rect x="551.3" y="514" width="36.28" height="2.2" fill="#fafafa"/>
<rect x="587.6" y="514" width="36.28" height="2.2" fill="#404040"/>
<rect x="623.8" y="516.3" width="36.28" height="2.2" fill="#404040"/><rect x="623.8" y="514" width="36.28" height="2.2" fill="#fafafa"/>
<rect x="660.1" y="514" width="36.28" height="2.2" fill="#404040"/>
<rect x="696.4" y="516.3" width="36.28" height="2.2" fill="#404040"/><rect x="696.4" y="514" width="36.28" height="2.2" fill="#fafafa"/>
<rect x="732.7" y="514" width="36.28" height="2.2" fill="#404040"/>
<rect x="769.0" y="516.3" width="36.28" height="2.2" fill="#404040"/><rect x="769.0" y="514" width="36.28" height="2.2" fill="#fafafa"/>
<rect x="805.2" y="514" width="36.28" height="2.2" fill="#404040"/>
<rect x="841.5" y="516.3" width="36.28" height="2.2" fill="#404040"/><rect x="841.5" y="514" width="36.28" height="2.2" fill="#fafafa"/>
<rect x="877.8" y="514" width="36.28" height="2.2" fill="#404040"/>
<rect x="914.1" y="516.3" width="36.28" height="2.2" fill="#404040"/><rect x="914.1" y="514" width="36.28" height="2.2" fill="#fafafa"/>
<rect x="950.4" y="514" width="36.28" height="2.2" fill="#404040"/>
<rect x="986.6" y="516.3" width="36.28" height="2.2" fill="#404040"/><rect x="986.6" y="514" width="36.28" height="2.2" fill="#fafafa"/>
<rect x="1022.9" y="514" width="36.28" height="2.2" fill="#404040"/>
<rect x="1059.2" y="516.3" width="36.28" height="2.2" fill="#404040"/><rect x="1059.2" y="514" width="36.28" height="2.2" fill="#fafafa"/>
<rect x="1095.5" y="514" width="36.28" height="2.2" fill="#404040"/>
<rect x="1131.8" y="516.3" width="36.28" height="2.2" fill="#404040"/><rect x="1131.8" y="514" width="36.28" height="2.2" fill="#fafafa"/>
<text x="515.0" y="523.2" font-family="Liberation Serif" font-size="4.8" fill="#1a1a1a" text-anchor="middle">0</text>
<text x="551.3" y="523.2" font-family="Liberation Serif" font-size="4.8" fill="#1a1a1a" text-anchor="middle">50</text>
<text x="587.6" y="523.2" font-family="Liberation Serif" font-size="4.8" fill="#1a1a1a" text-anchor="middle">100</text>
<text x="623.8" y="523.2" font-family="Liberation Serif" font-size="4.8" fill="#1a1a1a" text-anchor="middle">150</text>
<text x="660.1" y="523.2" font-family="Liberation Serif" font-size="4.8" fill="#1a1a1a" text-anchor="middle">200</text>
<text x="696.4" y="523.2" font-family="Liberation Serif" font-size="4.8" fill="#1a1a1a" text-anchor="middle">250</text>
<text x="732.7" y="523.2" font-family="Liberation Serif" font-size="4.8" fill="#1a1a1a" text-anchor="middle">300</text>
<text x="769.0" y="523.2" font-family="Liberation Serif" font-size="4.8" fill="#1a1a1a" text-anchor="middle">350</text>
<text x="805.2" y="523.2" font-family="Liberation Serif" font-size="4.8" fill="#1a1a1a" text-anchor="middle">400</text>
<text x="841.5" y="523.2" font-family="Liberation Serif" font-size="4.8" fill="#1a1a1a" text-anchor="middle">450</text>
<text x="877.8" y="523.2" font-family="Liberation Serif" font-size="4.8" fill="#1a1a1a" text-anchor="middle">500</text>
<text x="914.1" y="523.2" font-family="Liberation Serif" font-size="4.8" fill="#1a1a1a" text-anchor="middle">550</text>
<text x="950.4" y="523.2" font-family="Liberation Serif" font-size="4.8" fill="#1a1a1a" text-anchor="middle">600</text>
<text x="986.6" y="523.2" font-family="Liberation Serif" font-size="4.8" fill="#1a1a1a" text-anchor="middle">650</text>
<text x="1022.9" y="523.2" font-family="Liberation Serif" font-size="4.8" fill="#1a1a1a" text-anchor="middle">700</text>
<text x="1059.2" y="523.2" font-family="Liberation Serif" font-size="4.8" fill="#1a1a1a" text-anchor="middle">750</text>
<text x="1095.5" y="523.2" font-family="Liberation Serif" font-size="4.8" fill="#1a1a1a" text-anchor="middle">800</text>
<text x="1131.8" y="523.2" font-family="Liberation Serif" font-size="4.8" fill="#1a1a1a" text-anchor="middle">850</text>
<text x="1168.0" y="523.2" font-family="Liberation Serif" font-size="4.8" fill="#1a1a1a" text-anchor="middle">900</text>
</svg>
</body></html>
